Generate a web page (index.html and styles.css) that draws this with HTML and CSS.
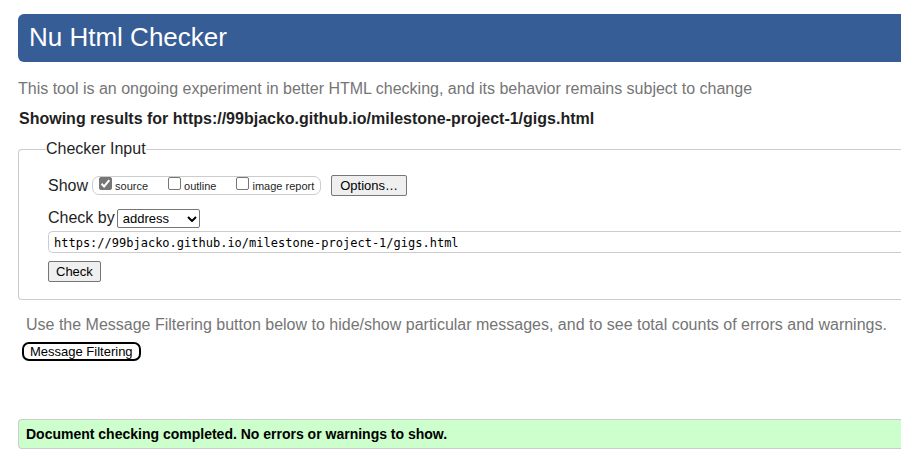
FILE: index.html
```html
<!DOCTYPE html>
<html lang="en">
<head>
<meta charset="utf-8">
<title>Nu Html Checker</title>
<link rel="stylesheet" href="styles.css">
</head>
<body>
<header class="banner"><h1>Nu Html Checker</h1></header>
<main>
<p class="about">This tool is an ongoing experiment in better HTML checking, and its behavior remains subject to change</p>
<h2 class="results-title">Showing results for https://99bjacko.github.io/milestone-project-1/gigs.html</h2>
<form>
<fieldset class="checker">
<legend>Checker Input</legend>
<div class="row show-row">
<span>Show</span>
<div class="options">
<label><input type="checkbox" checked><span>source</span></label>
<label><input type="checkbox"><span>outline</span></label>
<label><input type="checkbox"><span>image report</span></label>
</div>
<button class="button" type="button">Options…</button>
</div>
<div class="row by-row">
<label for="method">Check by</label>
<div class="select-wrap">
<select id="method"><option>address</option><option>file upload</option><option>text input</option></select>
<svg class="chevron" width="10" height="6" viewBox="0 0 10 6" aria-hidden="true"><path d="M1 1l4 4 4-4"/></svg>
</div>
</div>
<input class="address" type="text" aria-label="Address" value="https://99bjacko.github.io/milestone-project-1/gigs.html">
<button class="button" type="button">Check</button>
</fieldset>
</form>
<section class="filtering">
<p>Use the Message Filtering button below to hide/show particular messages, and to see total counts of errors and warnings.</p>
<button class="filter-button" type="button">Message Filtering</button>
</section>
<p class="success">Document checking completed. No errors or warnings to show.</p>
</main>
</body>
</html>
```
FILE: styles.css
```css
* {
  box-sizing: border-box;
}

body {
  margin: 0;
  padding: 14px 0 0 18px;
  background: #fff;
  color: #1f1f1f;
  font: 16px/20px "Liberation Sans", Arial, sans-serif;
}

button,
select,
input {
  font-family: inherit;
  margin: 0;
}

h1,
h2,
p {
  margin: 0;
}

.banner {
  padding: 7px 11px 9px;
  border-radius: 6px 0 0 6px;
  background: #365d95;
  color: #fff;
}

.banner h1 {
  font-size: 26px;
  font-weight: 400;
  line-height: 32px;
}

.about {
  margin-top: 17px;
  color: #757575;
}

.results-title {
  margin-top: 10px;
  padding-left: 1px;
  font-size: 16px;
  line-height: 20px;
}

.checker {
  min-width: 0;
  margin: 10px 0 0;
  padding: 16px 0 17px 29px;
  border: 1px solid #ccc;
  border-right: 0;
  border-radius: 4px 0 0 4px;
}

.checker legend {
  margin-left: -2px;
  padding: 0;
}

.row {
  display: flex;
  align-items: center;
}

.options {
  display: flex;
  gap: 20px;
  height: 19px;
  margin: 0 10px 0 4px;
  padding: 0 6px;
  border: 1px solid #ccc;
  border-radius: 7px;
  font-size: 11px;
  line-height: 19px;
}

.options label {
  display: flex;
  gap: 3px;
}

.options input {
  appearance: none;
  width: 13px;
  height: 13px;
  border: 1px solid #767676;
  border-radius: 2px;
  background: #fff;
}

.options input:checked {
  background: #767676 url("data:image/svg+xml,%3Csvg xmlns='http://www.w3.org/2000/svg' viewBox='0 0 11 11'%3E%3Cpath d='M1.5 5.8l2.6 2.6 5.2-6.2' fill='none' stroke='white' stroke-width='2'/%3E%3C/svg%3E");
}

.button {
  display: block;
  height: 21px;
  padding: 0 7px;
  border: 1px solid #767676;
  border-radius: 2px;
  background: #efefef;
  color: #000;
  font-size: 13px;
  line-height: 19px;
}

.show-row .button {
  padding: 0 8px;
}

.by-row {
  gap: 2px;
  margin-top: 12px;
}

.select-wrap {
  position: relative;
  display: flex;
}

.by-row select {
  appearance: none;
  width: 83px;
  height: 19px;
  padding: 0 20px 0 5px;
  border: 1px solid #767676;
  border-radius: 2px;
  background: #fff;
  color: #000;
  font-size: 13px;
  line-height: 17px;
}

.chevron {
  position: absolute;
  top: 7px;
  right: 3px;
  fill: none;
  stroke: #000;
  stroke-width: 2;
  pointer-events: none;
}

.address {
  display: block;
  width: 100%;
  height: 22px;
  margin: 3px 0 8px;
  padding: 2px 5px 0;
  border: 1px solid #ccc;
  border-right: 0;
  border-radius: 5px 0 0 5px;
  color: #000;
  font: 12px/18px "DejaVu Sans Mono", monospace;
}

.filtering {
  margin-top: 15px;
  padding-left: 4px;
}

.filtering p {
  padding-left: 4px;
  color: #757575;
}

.filter-button {
  display: block;
  height: 19px;
  margin-top: 7px;
  padding: 0 6px;
  border: 2px solid #000;
  border-radius: 7px;
  background: #fff;
  color: #000;
  font-size: 13px;
  line-height: 15px;
}

.success {
  margin-top: 58px;
  padding: 4px 7px;
  border: 1px solid #ccc;
  border-right: 0;
  border-radius: 4px 0 0 4px;
  background: #cfc;
  color: #000;
  font-size: 14px;
  font-weight: 700;
}
```
